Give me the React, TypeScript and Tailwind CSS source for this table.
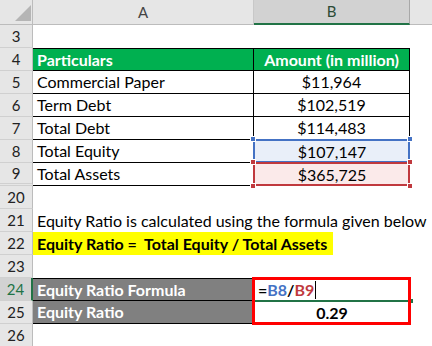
import type { ReactNode } from 'react';

const COLS = 'grid grid-cols-[33px_221px_156px_1fr]';

function RowNum({ n, className = '' }: { n: number; className?: string }) {
  return (
    <div
      className={`bg-[#e6e6e6] border-r border-b border-r-[#bcbcbc] border-b-[#d0d0d0] flex items-center justify-center text-[#222] text-[15px] ${className}`}
    >
      {n}
    </div>
  );
}

function Row({ n, children, numClass, h = 'h-[23px]' }: { n: number; children: ReactNode; numClass?: string; h?: string }) {
  return (
    <div className={`${COLS} ${h}`}>
      <RowNum n={n} className={numClass} />
      {children}
    </div>
  );
}

// little square on the corner of a highlighted range
function Handle({ pos, color }: { pos: string; color: string }) {
  return <span className={`absolute w-[6px] h-[6px] border border-white ${pos} ${color}`} />;
}

const tableRows = [
  { n: 5, label: 'Commercial Paper', value: '$11,964' },
  { n: 6, label: 'Term Debt', value: '$102,519' },
  { n: 7, label: 'Total Debt', value: '$114,483' },
];

export default function App() {
  return (
    <div className="w-[432px] h-[346px] overflow-hidden bg-white font-['Lato',sans-serif] text-[16px] text-black leading-none">
      {/* column headers */}
      <div className={`${COLS} h-[25px] text-[15px]`}>
        <div className="relative bg-[#e6e6e6] border-r border-b border-[#bcbcbc]">
          <svg className="absolute left-[15px] top-[5px]" width="16" height="16" viewBox="0 0 16 16">
            <polygon points="16,0 16,16 0,16" fill="#b5b5b5" />
          </svg>
        </div>
        <div className="bg-[#e6e6e6] border-r border-b border-r-[#c8c8c8] border-b-[#bcbcbc] flex items-center justify-center text-[#444]">
          A
        </div>
        <div className="bg-[#d2d2d2] border-r border-r-[#a8a8a8] border-b-2 border-b-[#217346] flex items-center justify-center text-[#2b4b36]">
          B
        </div>
        <div className="bg-[#e6e6e6] border-b border-[#bcbcbc]" />
      </div>

      <Row n={3}>
        <div />
        <div />
        <div />
      </Row>

      <Row n={4}>
        <div className="bg-[#00b050] border-y border-r border-black text-white font-bold flex items-center pl-[4px]">
          Particulars
        </div>
        <div className="bg-[#00b050] border-y border-r border-black text-white font-bold flex items-center justify-center">
          Amount (in million)
        </div>
        <div />
      </Row>

      {tableRows.map((r) => (
        <Row key={r.n} n={r.n}>
          <div className="border-b border-r border-black flex items-center pl-[4px]">{r.label}</div>
          <div className="border-b border-r border-black flex items-center justify-center">{r.value}</div>
          <div />
        </Row>
      ))}

      <Row n={8}>
        <div className="border-b border-r border-black flex items-center pl-[4px]">Total Equity</div>
        <div className="relative bg-[#e9eff9] flex items-center justify-center">
          $107,147
          <span className="absolute -top-[1px] -left-[1px] right-0 bottom-0 border-2 border-[#4472c4]" />
          <Handle pos="-top-[4px] -left-[4px]" color="bg-[#4472c4]" />
          <Handle pos="-top-[4px] -right-[3px]" color="bg-[#4472c4]" />
        </div>
        <div />
      </Row>

      <Row n={9} numClass="border-b-[3px] border-double border-b-[#a8a8a8]">
        <div className="border-b border-r border-black flex items-center pl-[4px]">Total Assets</div>
        <div className="relative bg-[#fbeaea] flex items-center justify-center">
          $365,725
          <span className="absolute -top-[1px] -left-[1px] right-0 bottom-0 border-2 border-[#c0393e]" />
          <Handle pos="-top-[4px] -left-[4px]" color="bg-[#c0393e]" />
          <Handle pos="-top-[4px] -right-[3px]" color="bg-[#c0393e]" />
          <Handle pos="-bottom-[3px] -left-[4px]" color="bg-[#c0393e]" />
          <Handle pos="-bottom-[3px] -right-[3px]" color="bg-[#c0393e]" />
        </div>
        <div />
      </Row>

      <Row n={20}>
        <div />
        <div />
        <div />
      </Row>

      <Row n={21}>
        <div className="flex items-center pl-[4px] whitespace-nowrap">
          Equity Ratio is calculated using the formula given below
        </div>
        <div />
        <div />
      </Row>

      <Row n={22}>
        <div className="flex items-stretch">
          <span className="shrink-0 w-[300px] bg-[#ffff00] font-bold flex items-center pl-[4px] whitespace-pre">
            Equity Ratio =  Total Equity / Total Assets
          </span>
        </div>
        <div />
        <div />
      </Row>

      <Row n={23}>
        <div />
        <div />
        <div />
      </Row>

      <Row n={24} numClass="!bg-[#d2d2d2] !text-[#217346] !border-r-2 !border-r-[#217346]">
        <div className="bg-[#808080] border-y border-r border-black text-white font-bold flex items-center pl-[4px]">
          Equity Ratio Formula
        </div>
        <div className="relative flex items-center pl-[4px] font-bold">
          <span>=</span>
          <span className="text-[#4472c4]">B8</span>
          <span>/</span>
          <span className="text-[#c0393e]">B9</span>
          <span className="ml-[1px] w-px h-[18px] bg-black" />
          <span className="absolute left-0 right-0 -bottom-[1px] h-[2px] bg-[#217346]" />
          <span className="absolute -right-[3px] -bottom-[2px] w-[5px] h-[4px] bg-[#217346]" />
          <span className="absolute -top-[1px] -left-[2px] w-[159px] h-[48px] border-[3px] border-[#ff0000] z-10" />
        </div>
        <div />
      </Row>

      <Row n={25}>
        <div className="bg-[#808080] border-b border-r border-black text-white font-bold flex items-center pl-[4px]">
          Equity Ratio
        </div>
        <div className="flex items-center justify-center font-bold">0.29</div>
        <div />
      </Row>

      <Row n={26}>
        <div />
        <div />
        <div />
      </Row>
    </div>
  );
}
